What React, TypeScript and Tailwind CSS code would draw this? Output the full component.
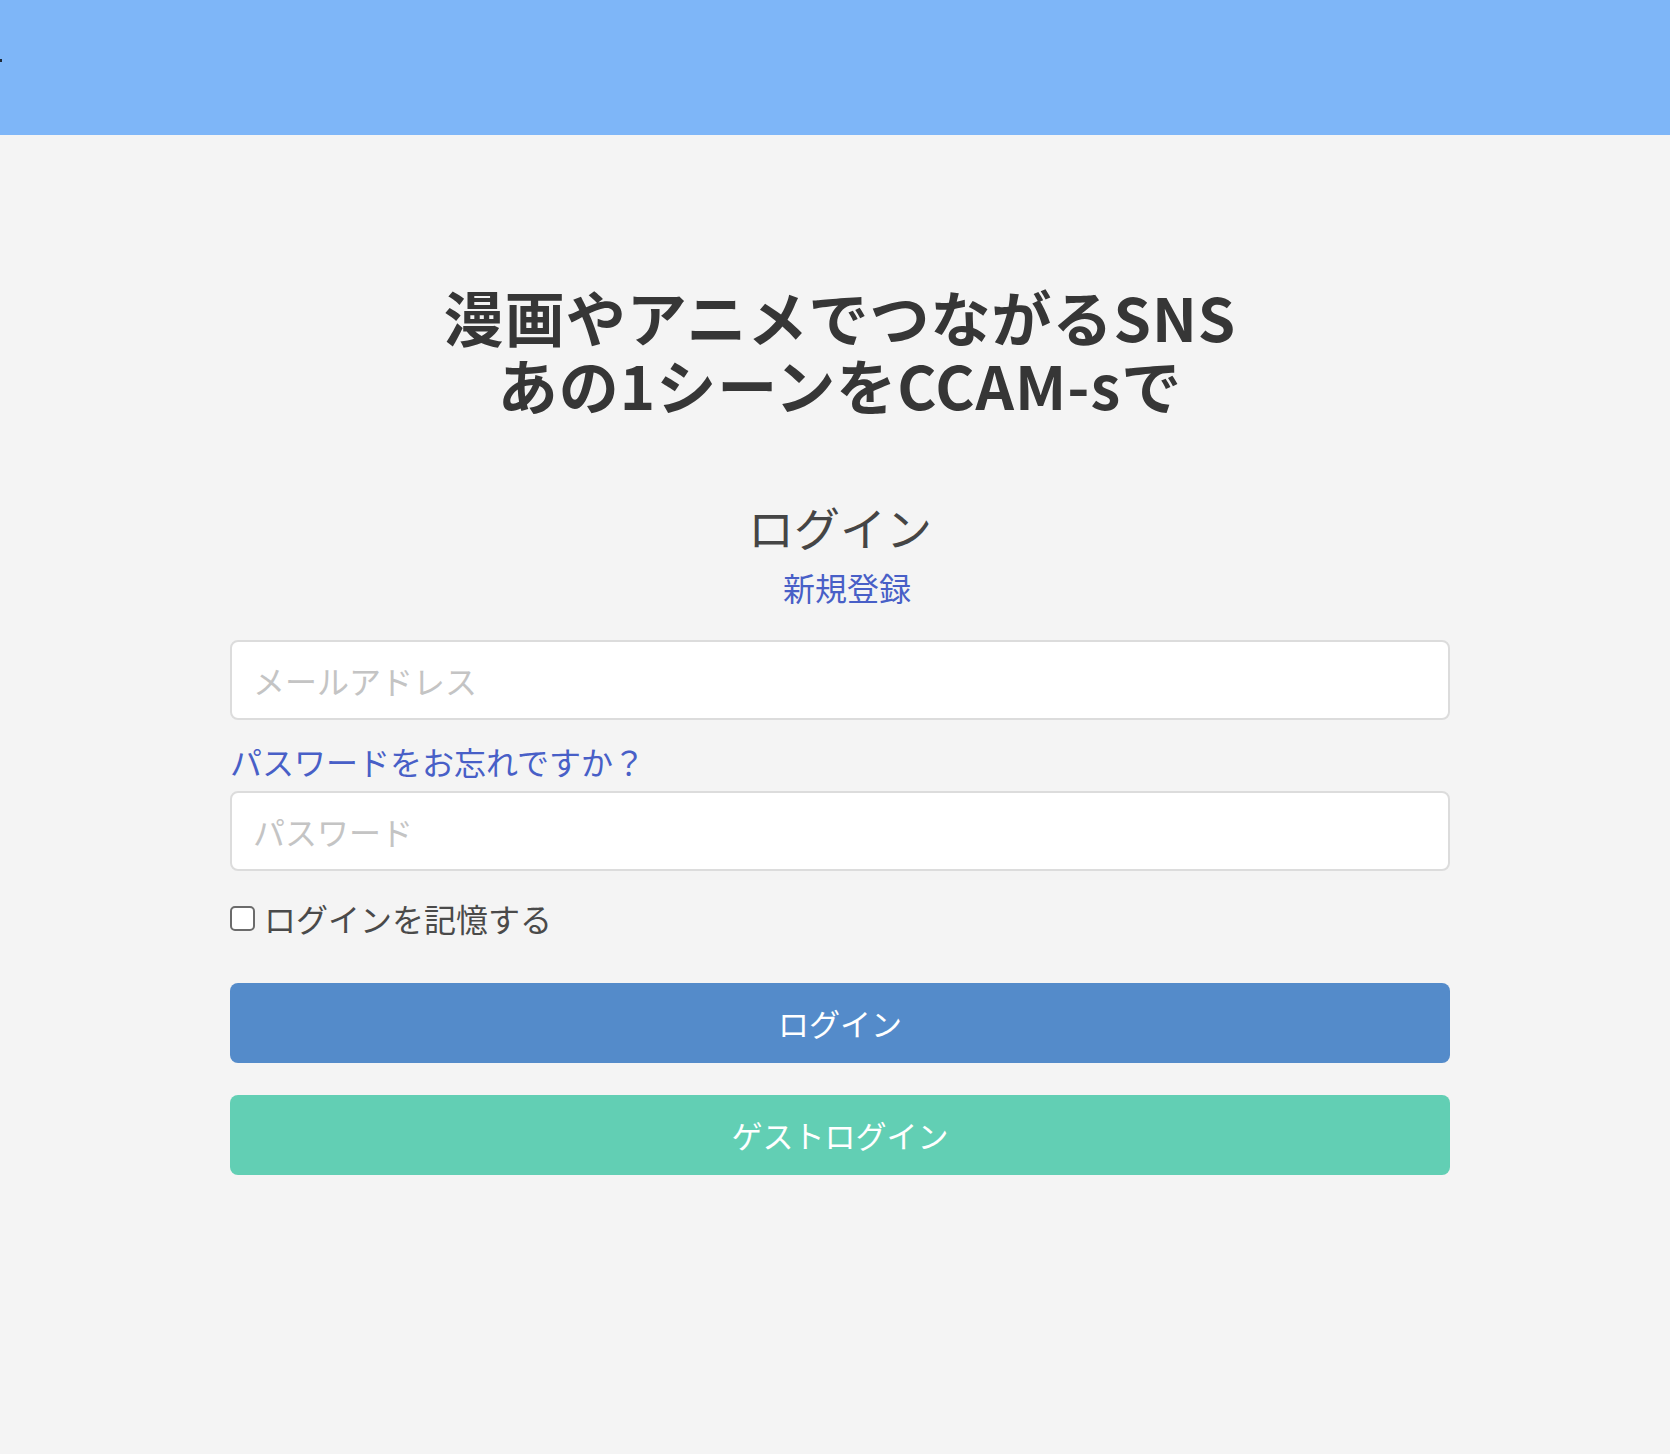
import React from "react";

const font = { fontFamily: '"Noto Sans CJK JP", "Noto Sans", sans-serif' };

export default function App() {
  return (
    <div className="min-h-[1454px] bg-[#f4f4f4]" style={font}>
      <header className="relative h-[135px] bg-[#7eb6f8]">
        <span className="absolute left-0 top-[59px] h-[3px] w-[2px] bg-[#1f2937]" />
      </header>

      <main className="flex flex-col items-center pl-[10px]">
        <h1 className="mt-[147px] text-center text-[60px] font-bold leading-[68px] tracking-[1px] text-[#363636]">
          漫画やアニメでつながるSNS
          <br />
          あの1シーンをCCAM-sで
        </h1>

        <section className="mt-[80px] flex w-[1220px] flex-col">
          <h2 className="flex h-[56px] items-center justify-center text-[46px] text-[#454545]">
            ログイン
          </h2>
          <a
            href="#"
            className="mt-[13px] flex h-[40px] items-center justify-center pl-[14px] text-[32px] text-[#485fc7]"
          >
            新規登録
          </a>

          <input
            type="email"
            placeholder="メールアドレス"
            className="mt-[33px] h-[80px] w-full rounded-[8px] border-2 border-[#dcdcdc] bg-white px-[21px] text-[32px] text-[#363636] outline-none placeholder:text-[#c4c4c4]"
          />

          <a
            href="#"
            className="mt-[21px] flex h-[40px] items-center text-[32px] text-[#485fc7]"
          >
            パスワードをお忘れですか？
          </a>
          <input
            type="password"
            placeholder="パスワード"
            className="mt-[10px] h-[80px] w-full rounded-[8px] border-2 border-[#dcdcdc] bg-white px-[21px] text-[32px] text-[#363636] outline-none placeholder:text-[#c4c4c4]"
          />

          <label className="mt-[27px] flex h-[40px] items-center gap-[9px] text-[32px] text-[#4a4a4a]">
            <span className="h-[25px] w-[25px] rounded-[5px] border-2 border-[#6b6b6b] bg-white" />
            ログインを記憶する
          </label>

          <button className="mt-[45px] flex h-[80px] w-full items-center justify-center rounded-[8px] bg-[#548bca] text-[31px] text-white">
            ログイン
          </button>
          <button className="mt-[32px] flex h-[80px] w-full items-center justify-center rounded-[8px] bg-[#62cfb4] text-[31px] text-white">
            ゲストログイン
          </button>
        </section>
      </main>
    </div>
  );
}
